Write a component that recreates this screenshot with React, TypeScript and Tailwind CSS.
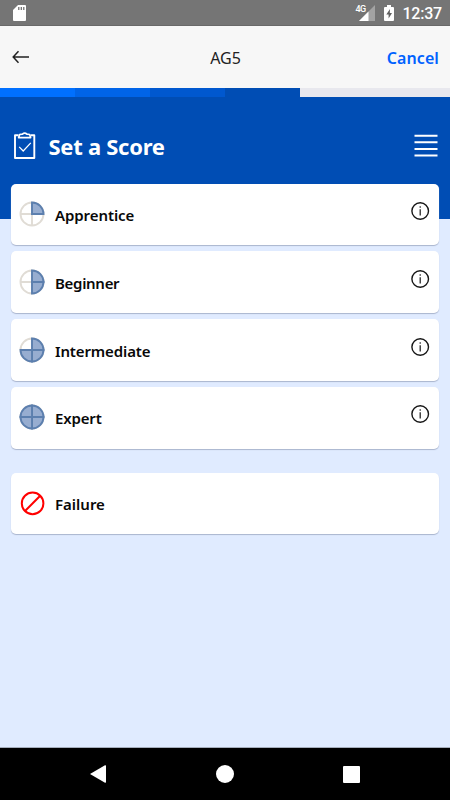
interface Score {
  label: string;
  quarters: number;
  tracking: string;
  margin: string;
}

const SCORES: Score[] = [
  { label: "Apprentice", quarters: 1, tracking: "tracking-[-0.08px]", margin: "mb-[6px]" },
  { label: "Beginner", quarters: 2, tracking: "tracking-[-0.3px]", margin: "mb-[6px]" },
  { label: "Intermediate", quarters: 3, tracking: "tracking-[-0.13px]", margin: "mb-[6px]" },
  { label: "Expert", quarters: 4, tracking: "tracking-[-0.15px]", margin: "mb-[24px]" },
];

// Clockwise from twelve o'clock
const QUARTERS = [
  "M13 13V1.5A11.5 11.5 0 0 1 24.5 13Z",
  "M13 13H24.5A11.5 11.5 0 0 1 13 24.5Z",
  "M13 13V24.5A11.5 11.5 0 0 1 1.5 13Z",
  "M13 13H1.5A11.5 11.5 0 0 1 13 1.5Z",
];

function ScoreIcon({ quarters }: { quarters: number }) {
  return (
    <svg width="26" height="26" viewBox="0 0 26 26" fill="none" strokeWidth="1.9">
      <circle cx="13" cy="13" r="11.5" stroke="#e0dcd5" />
      <path d="M13 1.5V24.5M1.5 13H24.5" stroke="#e0dcd5" />
      {QUARTERS.slice(0, quarters).map((d) => (
        <path key={d} d={d} fill="#97add0" stroke="#5c7fae" />
      ))}
    </svg>
  );
}

function FailureIcon() {
  return (
    <svg width="26" height="26" viewBox="0 0 26 26" fill="none" stroke="#ff0000" strokeWidth="2">
      <circle cx="13.6" cy="13.4" r="10.8" />
      <path d="M6 21L21.2 5.8" />
    </svg>
  );
}

function InfoIcon() {
  return (
    <svg width="20" height="20" viewBox="0 0 20 20" fill="none" stroke="#161616" strokeWidth="1.4">
      <circle cx="10.2" cy="10" r="8.3" />
      <path d="M10.2 8.3V14.6" strokeWidth="1.2" />
      <circle cx="10.2" cy="6" r=".8" fill="#161616" stroke="none" />
    </svg>
  );
}

function StatusBar() {
  return (
    <div className="flex h-[26px] shrink-0 items-start border-b border-[#696969] bg-[#757575] text-white">
      <svg className="ml-[13px] mt-[5px]" width="13" height="16" viewBox="0 0 13 16">
        <path d="M5 0H12Q13 0 13 1V15Q13 16 12 16H1Q0 16 0 15V5Z" fill="#fff" />
        <path d="M5.8 2V5M8.3 2V5M10.8 2V5" stroke="#666" strokeWidth="1.2" />
      </svg>
      <div className="ml-auto flex">
        <span className="mt-[4px] font-['Roboto',sans-serif] text-[9px] font-medium leading-[10px] tracking-[-0.7px]">
          4G
        </span>
        <svg className="-ml-[6px] mt-[5px]" width="16" height="16" viewBox="0 0 16 16">
          <path d="M16 0V16H0L8 8V8Z" fill="#a3a3a3" />
          <path d="M9.5 6.5V16H0Z" fill="#fff" />
        </svg>
        <svg className="ml-[9px] mt-[5px]" width="10" height="16" viewBox="0 0 10 16">
          <path d="M3 0H7V2H9Q10 2 10 3V15Q10 16 9 16H1Q0 16 0 15V3Q0 2 1 2H3Z" fill="#fff" />
          <path d="M6 4L2.3 9.5H4.6V13.5L8 8H5.8Z" fill="#606060" />
        </svg>
      </div>
      <span className="ml-[8px] mr-[8px] mt-[5px] font-['Roboto',sans-serif] text-[16px] font-medium leading-[18px] tracking-[-0.2px]">
        12:37
      </span>
    </div>
  );
}

function NavBar() {
  return (
    <div className="flex h-[62px] shrink-0 items-center bg-[#f7f7f7] pb-[1px]">
      <div className="flex-1 pl-[12px]">
        <svg width="18" height="14" viewBox="0 0 18 14" fill="none" stroke="#222" strokeWidth="1.5">
          <path d="M1.5 7H17M6.5 1.3L1.2 7L6.5 12.7" />
        </svg>
      </div>
      <h1 className="pt-[3px] font-['Noto_Sans',sans-serif] text-[16px] leading-[22px] text-[#222]">AG5</h1>
      <div className="flex-1 pr-[11px] pt-[3px] text-right font-['Noto_Sans',sans-serif] text-[16px] font-semibold leading-[22px] tracking-[0.1px] text-[#0062ff]">
        Cancel
      </div>
    </div>
  );
}

function Progress() {
  return (
    <div className="flex h-[9px]">
      <div className="w-[75px] bg-[#0070ff]" />
      <div className="w-[75px] bg-[#0064e8]" />
      <div className="w-[75px] bg-[#0058cf]" />
      <div className="w-[75px] bg-[#004db4]" />
      <div className="flex-1 bg-[#e8e8ee]" />
    </div>
  );
}

function ScoreHeader() {
  return (
    <div className="flex h-[122px] items-start bg-[#004db4] pl-[14px] pr-[12px] text-white">
      <svg className="mt-[35px]" width="22" height="28" viewBox="0 0 22 28" fill="none" stroke="#fff">
        <path d="M4.5 3.3H1V26H20.3V3.3H16.8" strokeWidth="1.9" strokeLinejoin="round" />
        <path d="M4.7 5.6H16.6L15.7 2.5L12.9 2.2Q10.7 0 8.4 2.2L5.6 2.5Z" strokeWidth="1.7" strokeLinejoin="round" />
        <path d="M5.2 14.8L9.2 19L16.8 10.8" strokeWidth="1.2" />
      </svg>
      <h2 className="ml-[12.5px] mt-[34px] whitespace-nowrap font-['Noto_Sans',sans-serif] text-[22px] font-bold leading-[30px] tracking-[-0.28px]">
        Set a Score
      </h2>
      <svg className="ml-auto mt-[37px]" width="24" height="24" viewBox="0 0 24 24" stroke="#fff" strokeWidth="2">
        <path d="M.5 1.7H23.5M.5 8.3H23.5M.5 15H23.5M.5 21.5H23.5" />
      </svg>
    </div>
  );
}

export default function App() {
  return (
    <div className="flex h-[800px] w-[450px] flex-col overflow-hidden bg-[#e0ebff]">
      <StatusBar />
      <NavBar />
      <Progress />
      <ScoreHeader />

      <div className="-mt-[35.5px] flex-1 px-[11px]">
        {SCORES.map((score) => (
          <div
            key={score.label}
            className={`flex h-[61.8px] items-start rounded-[5px] bg-white pl-[8px] pr-[9px] shadow-[0_1px_1px_#a9b5ce] ${score.margin}`}
          >
            <div className="mt-[17.5px]">
              <ScoreIcon quarters={score.quarters} />
            </div>
            <span className={`ml-[10px] mt-[20.5px] font-['Noto_Sans',sans-serif] text-[15px] font-semibold leading-[22px] text-[#080808] ${score.tracking}`}>
              {score.label}
            </span>
            <div className="ml-auto mt-[17.5px]">
              <InfoIcon />
            </div>
          </div>
        ))}
        <div className="flex h-[61.8px] items-start rounded-[5px] bg-white pl-[8px] shadow-[0_1px_1px_#a9b5ce]">
          <div className="mt-[17.5px]">
            <FailureIcon />
          </div>
          <span className="ml-[10px] mt-[20.5px] font-['Noto_Sans',sans-serif] text-[15px] font-semibold leading-[22px] text-[#080808]">
            Failure
          </span>
        </div>
      </div>

      {/* Android system navigation */}
      <div className="flex h-[53px] shrink-0 items-center border-t border-[#a5adbb] bg-black pl-[90px] pr-[90px]">
        <svg width="16" height="18" viewBox="0 0 16 18" fill="#fff">
          <path d="M0 9L15 .3Q16 0 16 1V17Q16 18 15 17.7Z" />
        </svg>
        <div className="ml-[110px] h-[18px] w-[18px] rounded-full bg-white" />
        <div className="ml-auto h-[17px] w-[17px] rounded-[1px] bg-white" />
      </div>
    </div>
  );
}
